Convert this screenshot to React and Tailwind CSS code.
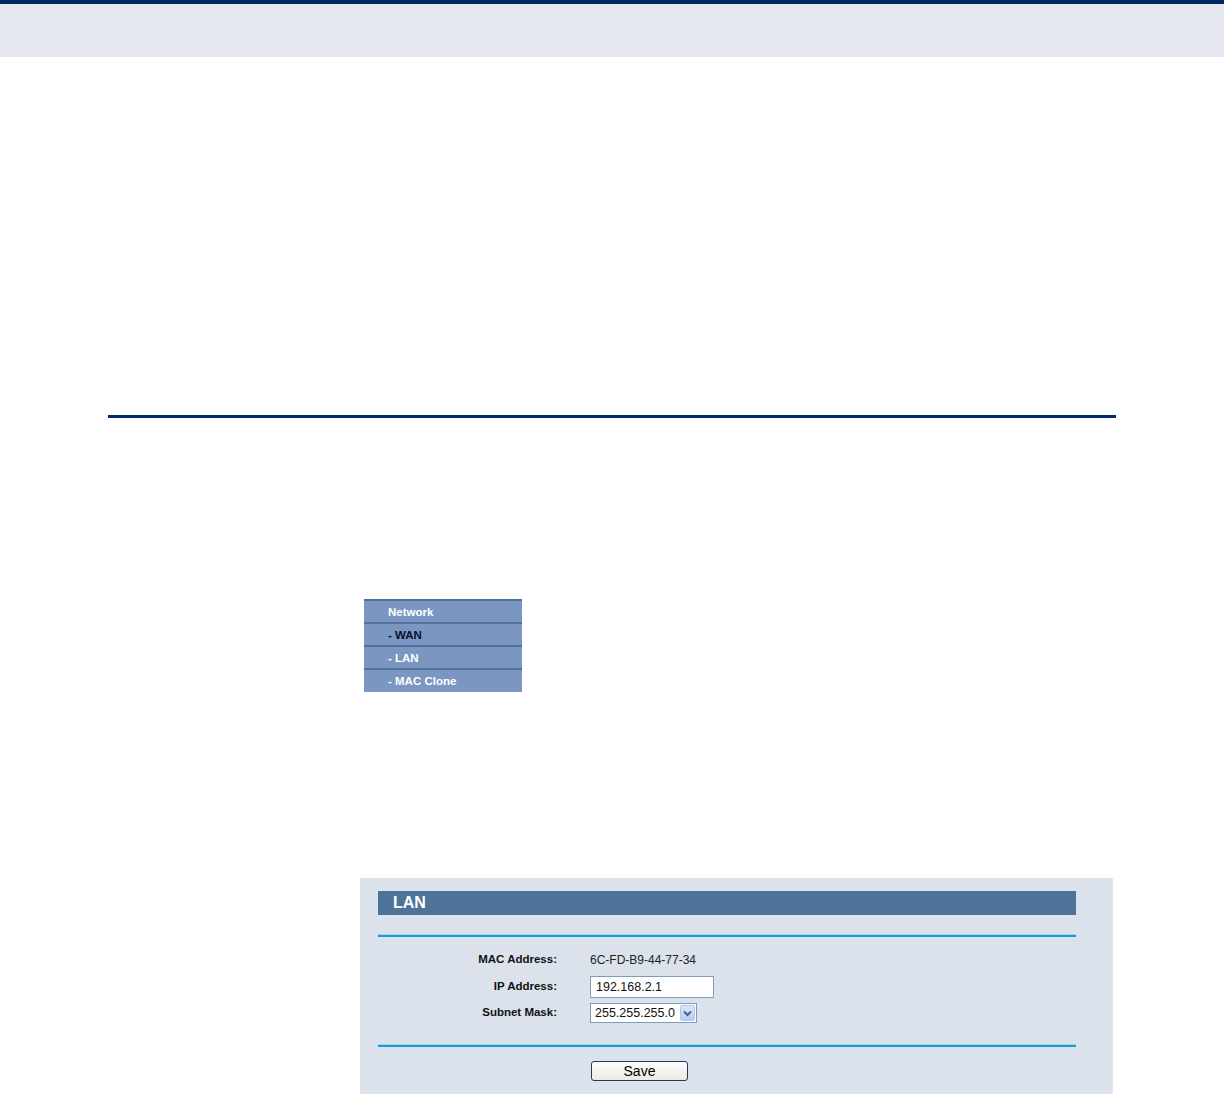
import React from 'react';

const menuItems = [
    { label: 'Network', dark: false },
    { label: '- WAN', dark: true },
    { label: '- LAN', dark: false },
    { label: '- MAC Clone', dark: false }
];

const SideMenu = () => (
    <div className="w-[158px] bg-[#7b96c1] pb-px">
        {menuItems.map((item) => (
            <div
                key={item.label}
                className={`h-[23px] border-t-2 border-[#52729c] pl-[24px] pt-[2px] flex items-center text-[11.5px] font-bold ${
                    item.dark ? 'text-[#0a0f2e]' : 'text-white'
                }`}
            >
                {item.label}
            </div>
        ))}
    </div>
);

const Divider = () => (
    <div className="w-[698px]">
        <div className="h-px bg-[#9fd2ec]" />
        <div className="h-[2px] bg-[#1f98d4]" />
    </div>
);

const FormRow = ({ label, children, height = 'h-[22px]' }) => (
    <div className={`flex items-center ${height}`}>
        <div className="w-[179px] text-right text-[11.5px] font-bold text-[#111]">{label}</div>
        <div className="ml-[33px] flex items-center">{children}</div>
    </div>
);

const LanPanel = () => (
    <div className="w-[753px] bg-[#dce2ec] pt-[13px] pb-[13px] pl-[18px] border-r border-[#e3e7ef]">
        <div className="w-[698px] h-[24px] bg-[#4e7399] flex items-center pl-[15px] text-white font-bold text-[16px]">
            LAN
        </div>
        <div className="mt-[19px]">
            <Divider />
        </div>
        <div className="mt-[12px] flex flex-col gap-[5px]">
            <FormRow label="MAC Address:">
                <span className="text-[12px] text-[#222]">6C-FD-B9-44-77-34</span>
            </FormRow>
            <FormRow label="IP Address:">
                <div className="w-[124px] h-[22px] bg-white border border-[#7f9db9] pl-[5px] flex items-center text-[12.5px] text-[#111]">
                    192.168.2.1
                </div>
            </FormRow>
            <FormRow label="Subnet Mask:" height="h-[20px]">
                <div className="w-[107px] h-[20px] bg-white border border-[#7f9db9] pl-[4px] pr-px flex items-center justify-between text-[12.5px] text-[#111]">
                    <span>255.255.255.0</span>
                    <span className="w-[15px] h-[16px] rounded-[2px] border border-[#b4c6ea] bg-gradient-to-b from-[#dbe6fb] to-[#b7ccf5] flex items-center justify-center">
                        <svg width="9" height="7" viewBox="0 0 9 7">
                            <path d="M1 1.5 L4.5 5 L8 1.5" fill="none" stroke="#4d6185" strokeWidth="2" />
                        </svg>
                    </span>
                </div>
            </FormRow>
        </div>
        <div className="mt-[21px]">
            <Divider />
        </div>
        <div className="mt-[14px] ml-[213px]">
            <button className="w-[97px] h-[20px] rounded-[3px] border border-[#1c3a66] bg-gradient-to-b from-white to-[#ece9e0] text-[14px] text-black flex items-center justify-center">
                Save
            </button>
        </div>
    </div>
);

const App = () => {
    return (
        <div className="w-[1224px] min-h-[1094px] bg-white font-['Liberation_Sans',Arial,sans-serif]">
            <div className="h-[4px] bg-[#002664]" />
            <div className="h-[53px] bg-[#e5e8f1]" />

            <div className="mt-[358px] ml-[108px] w-[1008px] h-[3px] bg-[#002b6b]" />

            <div className="mt-[181px] ml-[364px]">
                <SideMenu />
            </div>

            <div className="mt-[186px] ml-[360px]">
                <LanPanel />
            </div>
        </div>
    );
};

export default App;
